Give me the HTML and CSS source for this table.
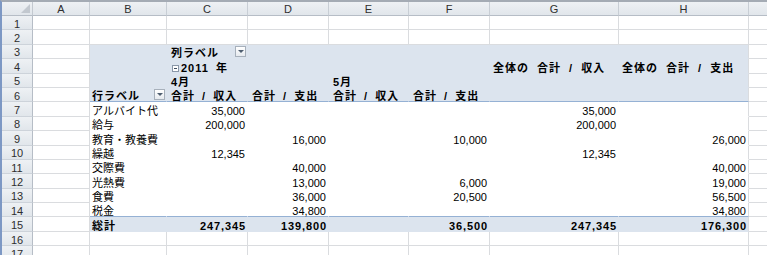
FILE: index.html
```html
<!DOCTYPE html>
<html lang="ja">
<head>
<meta charset="utf-8">
<link rel="stylesheet" href="styles.css">
</head>
<body>
<div class="frame">
<div class="sheet">
  <div class="corner"><span class="tri"></span></div>
  <div class="ch">A</div><div class="ch">B</div><div class="ch">C</div><div class="ch">D</div><div class="ch">E</div><div class="ch">F</div><div class="ch">G</div><div class="ch">H</div><div class="ch"></div>

  <div class="rh">1</div><div class="c"></div><div class="c"></div><div class="c"></div><div class="c"></div><div class="c"></div><div class="c"></div><div class="c"></div><div class="c"></div><div class="c"></div>
  <div class="rh">2</div><div class="c"></div><div class="c"></div><div class="c"></div><div class="c"></div><div class="c"></div><div class="c"></div><div class="c"></div><div class="c"></div><div class="c"></div>

  <div class="rh">3</div><div class="c"></div>
  <div class="c ph"></div>
  <div class="c ph b split"><span class="hc">列ラベル</span><span class="dd"></span></div>
  <div class="c ph"></div><div class="c ph"></div><div class="c ph"></div><div class="c ph"></div><div class="c ph end"></div><div class="c"></div>

  <div class="rh">4</div><div class="c"></div>
  <div class="c ph"></div>
  <div class="c ph b"><span class="hc yr"><span class="minus"></span>2011 年</span></div>
  <div class="c ph"></div><div class="c ph"></div><div class="c ph"></div>
  <div class="c ph b"><span class="gt">全体の 合計 / 収入</span></div>
  <div class="c ph b end"><span class="gt">全体の 合計 / 支出</span></div><div class="c"></div>

  <div class="rh">5</div><div class="c"></div>
  <div class="c ph"></div>
  <div class="c ph b"><span class="hc">4月</span></div>
  <div class="c ph"></div>
  <div class="c ph b"><span class="hc">5月</span></div>
  <div class="c ph"></div><div class="c ph"></div><div class="c ph end"></div><div class="c"></div>

  <div class="rh">6</div><div class="c"></div>
  <div class="c ph pl b split"><span>行ラベル</span><span class="dd"></span></div>
  <div class="c ph pl b"><span class="hc">合計 / 収入</span></div>
  <div class="c ph pl b"><span class="hc">合計 / 支出</span></div>
  <div class="c ph pl b"><span class="hc">合計 / 収入</span></div>
  <div class="c ph pl b"><span class="hc">合計 / 支出</span></div>
  <div class="c ph pl"></div><div class="c ph pl end"></div><div class="c"></div>

  <div class="rh">7</div><div class="c"></div>
  <div class="c pv">アルバイト代</div><div class="c pv n">35,000</div><div class="c pv"></div><div class="c pv"></div><div class="c pv"></div><div class="c pv n">35,000</div><div class="c pv end"></div><div class="c"></div>

  <div class="rh">8</div><div class="c"></div>
  <div class="c pv">給与</div><div class="c pv n">200,000</div><div class="c pv"></div><div class="c pv"></div><div class="c pv"></div><div class="c pv n">200,000</div><div class="c pv end"></div><div class="c"></div>

  <div class="rh">9</div><div class="c"></div>
  <div class="c pv">教育・教養費</div><div class="c pv"></div><div class="c pv n">16,000</div><div class="c pv"></div><div class="c pv n">10,000</div><div class="c pv"></div><div class="c pv n end">26,000</div><div class="c"></div>

  <div class="rh">10</div><div class="c"></div>
  <div class="c pv">繰越</div><div class="c pv n">12,345</div><div class="c pv"></div><div class="c pv"></div><div class="c pv"></div><div class="c pv n">12,345</div><div class="c pv end"></div><div class="c"></div>

  <div class="rh">11</div><div class="c"></div>
  <div class="c pv">交際費</div><div class="c pv"></div><div class="c pv n">40,000</div><div class="c pv"></div><div class="c pv"></div><div class="c pv"></div><div class="c pv n end">40,000</div><div class="c"></div>

  <div class="rh">12</div><div class="c"></div>
  <div class="c pv">光熱費</div><div class="c pv"></div><div class="c pv n">13,000</div><div class="c pv"></div><div class="c pv n">6,000</div><div class="c pv"></div><div class="c pv n end">19,000</div><div class="c"></div>

  <div class="rh">13</div><div class="c"></div>
  <div class="c pv">食費</div><div class="c pv"></div><div class="c pv n">36,000</div><div class="c pv"></div><div class="c pv n">20,500</div><div class="c pv"></div><div class="c pv n end">56,500</div><div class="c"></div>

  <div class="rh">14</div><div class="c"></div>
  <div class="c pv pl">税金</div><div class="c pv pl"></div><div class="c pv pl n">34,800</div><div class="c pv pl"></div><div class="c pv pl"></div><div class="c pv pl"></div><div class="c pv pl n end">34,800</div><div class="c"></div>

  <div class="rh">15</div><div class="c"></div>
  <div class="c pt b">総計</div><div class="c pt b n">247,345</div><div class="c pt b n">139,800</div><div class="c pt"></div><div class="c pt b n">36,500</div><div class="c pt b n">247,345</div><div class="c pt b n end">176,300</div><div class="c"></div>

  <div class="rh">16</div><div class="c"></div><div class="c"></div><div class="c"></div><div class="c"></div><div class="c"></div><div class="c"></div><div class="c"></div><div class="c"></div><div class="c"></div>
  <div class="rh">17</div><div class="c"></div><div class="c"></div><div class="c"></div><div class="c"></div><div class="c"></div><div class="c"></div><div class="c"></div><div class="c"></div><div class="c"></div>
</div>
</div>
</body>
</html>
```
FILE: styles.css
```css
html, body {
  margin: 0;
  padding: 0;
  background: #ffffff;
  overflow: hidden;
}

.frame {
  border-top: 2px solid #a4abb4;
  border-left: 2px solid #7d98c4;
  height: 253px;
  overflow: hidden;
}

.sheet {
  display: grid;
  grid-template-columns: 31px 57px 77px 81px 81px 80px 81px 129px 130px 40px;
  grid-template-rows: 14px repeat(17, 14.4px);
  font-family: "Liberation Sans", "Noto Sans CJK JP", sans-serif;
  font-size: 11px;
  color: #000;
}

.corner,
.ch,
.rh {
  box-sizing: border-box;
  background: linear-gradient(#eef1f4, #e1e6eb);
  color: #2e2e2e;
  font-size: 11px;
  line-height: 12px;
  display: flex;
  align-items: center;
  justify-content: center;
}

.corner {
  border-right: 1px solid #c3c9d0;
  border-bottom: 1px solid #b6bdc6;
  justify-content: flex-end;
  align-items: flex-end;
  padding: 0 2px 2px 0;
}

.tri {
  width: 0;
  height: 0;
  border-left: 9px solid transparent;
  border-bottom: 9px solid #c2c8cf;
}

.ch {
  border-right: 1px solid #c8ced5;
  border-bottom: 1px solid #b6bdc6;
}

.rh {
  border-right: 1px solid #b6bdc6;
  border-bottom: 1px solid #cdd3da;
  padding-top: 2px;
}

.c {
  box-sizing: border-box;
  border-right: 1px solid #dadcdf;
  border-bottom: 1px solid #dadcdf;
  display: flex;
  align-items: flex-end;
  padding: 0 2px 0 2px;
  line-height: 9px;
  white-space: nowrap;
  min-width: 0;
}

.pv {
  background: #ffffff;
  border-color: #ffffff;
}

.ph,
.pt {
  background: #dce4ee;
  border-color: #dce4ee;
}

.pl {
  border-bottom-color: #95b1d4;
}

.end {
  border-right-color: #dadcdf;
}

.n {
  justify-content: flex-end;
}

.b {
  font-weight: bold;
  letter-spacing: 1px;
}

.b.n {
  letter-spacing: 0.9px;
  padding-right: 1px;
}

.hc {
  padding-left: 2px;
  word-spacing: 3px;
}

.gt {
  padding-left: 1px;
  word-spacing: 4px;
}

.split {
  justify-content: space-between;
  align-items: flex-end;
  padding-right: 1px;
}

.dd {
  box-sizing: border-box;
  width: 11px;
  height: 11px;
  margin-bottom: 1px;
  border: 1px solid #a7b0bb;
  background: linear-gradient(#ffffff, #e6eaef);
  display: flex;
  align-items: center;
  justify-content: center;
}

.dd::after {
  content: "";
  width: 0;
  height: 0;
  border-left: 3px solid transparent;
  border-right: 3px solid transparent;
  border-top: 3px solid #4f5e70;
}

.yr {
  display: flex;
  align-items: center;
  padding-left: 3px;
}

.minus {
  box-sizing: border-box;
  width: 7px;
  height: 7px;
  border: 1px solid #8a97a8;
  background: #ffffff;
  margin-right: 2px;
  display: flex;
  align-items: center;
  justify-content: center;
}

.minus::after {
  content: "";
  width: 3px;
  height: 1px;
  background: #3d4b5c;
}
```
